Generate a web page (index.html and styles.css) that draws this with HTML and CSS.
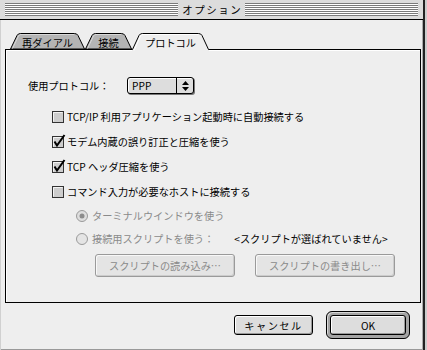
FILE: index.html
```html
<!DOCTYPE html>
<html lang="ja">

<head>
    <meta charset="UTF-8">
    <title>オプション</title>
    <link rel="stylesheet" href="styles.css">
</head>

<body>
    <div class="window">
        <!-- Title bar -->
        <div class="titlebar">
            <div class="stripes"></div>
            <div class="title">オプション</div>
            <div class="stripes"></div>
        </div>

        <div class="content">
            <!-- Tabs -->
            <div class="tabs">
                <div class="tab tab-redial">
                    <svg class="tab-shape" width="75" height="16" viewBox="0 0 75 16">
                        <path d="M0.5 16 L7 2.5 Q8 0.5 10.5 0.5 L64.5 0.5 Q67 0.5 68 2.5 L74.5 16 Z" fill="#b4b4b4" stroke="#000"/>
                        <path d="M2.5 15.5 L8.5 3 Q9.3 1.5 11 1.5 L64 1.5" fill="none" stroke="#d8d8d8"/>
                    </svg>
                    <span>再ダイアル</span>
                </div>
                <div class="tab tab-connect">
                    <svg class="tab-shape" width="47" height="16" viewBox="0 0 47 16">
                        <path d="M0.5 16 L7 2.5 Q8 0.5 10.5 0.5 L36.5 0.5 Q39 0.5 40 2.5 L46.5 16 Z" fill="#b4b4b4" stroke="#000"/>
                        <path d="M2.5 15.5 L8.5 3 Q9.3 1.5 11 1.5 L36 1.5" fill="none" stroke="#d8d8d8"/>
                    </svg>
                    <span>接続</span>
                </div>
                <div class="tab tab-protocol active">
                    <svg class="tab-shape" width="77" height="18" viewBox="0 0 77 18">
                        <path d="M0 18 L0 16.5 L7 2.5 Q8 0.5 10.5 0.5 L66.5 0.5 Q69 0.5 70 2.5 L77 16.5 L77 18 Z" fill="#eeeeee"/>
                        <path d="M0 16.5 L0.5 16.5 L7 2.5 Q8 0.5 10.5 0.5 L66.5 0.5 Q69 0.5 70 2.5 L76.5 16.5 L77 16.5" fill="none" stroke="#000"/>
                        <path d="M2 17.5 L8.5 3 Q9.3 1.5 11 1.5 L66 1.5" fill="none" stroke="#fff"/>
                    </svg>
                    <span>プロトコル</span>
                </div>
            </div>

            <!-- Protocol panel -->
            <div class="panel">
                <div class="protocol-row">
                    <span class="field-label">使用プロトコル：</span>
                    <div class="popup">
                        <span class="popup-value">PPP</span>
                        <span class="popup-arrows">
                            <svg width="7" height="10" viewBox="0 0 7 10">
                                <path d="M0 4 L3.5 0 L7 4 Z M0 6 L3.5 10 L7 6 Z" fill="#000"/>
                            </svg>
                        </span>
                    </div>
                </div>

                <div class="opt">
                    <svg class="checkbox" width="12" height="12" viewBox="0 0 12 12">
                        <rect x="0.5" y="0.5" width="11" height="11" fill="#cdcdcd" stroke="#333"/>
                        <path d="M1.5 10.5 V1.5 H10.5" fill="none" stroke="#f4f4f4"/>
                    </svg>
                    <span>TCP/IP 利用アプリケーション起動時に自動接続する</span>
                </div>
                <div class="opt">
                    <svg class="checkbox" width="12" height="12" viewBox="0 0 12 12">
                        <rect x="0.5" y="0.5" width="11" height="11" fill="#cdcdcd" stroke="#333"/>
                        <path d="M1.5 10.5 V1.5 H10.5" fill="none" stroke="#f4f4f4"/>
                        <path d="M2.5 5.5 L5 9.5 L12.5 -1" fill="none" stroke="#000" stroke-width="2"/>
                    </svg>
                    <span>モデム内蔵の誤り訂正と圧縮を使う</span>
                </div>
                <div class="opt">
                    <svg class="checkbox" width="12" height="12" viewBox="0 0 12 12">
                        <rect x="0.5" y="0.5" width="11" height="11" fill="#cdcdcd" stroke="#333"/>
                        <path d="M1.5 10.5 V1.5 H10.5" fill="none" stroke="#f4f4f4"/>
                        <path d="M2.5 5.5 L5 9.5 L12.5 -1" fill="none" stroke="#000" stroke-width="2"/>
                    </svg>
                    <span>TCP ヘッダ圧縮を使う</span>
                </div>
                <div class="opt">
                    <svg class="checkbox" width="12" height="12" viewBox="0 0 12 12">
                        <rect x="0.5" y="0.5" width="11" height="11" fill="#cdcdcd" stroke="#333"/>
                        <path d="M1.5 10.5 V1.5 H10.5" fill="none" stroke="#f4f4f4"/>
                    </svg>
                    <span>コマンド入力が必要なホストに接続する</span>
                </div>

                <div class="opt sub disabled">
                    <svg class="radio" width="12" height="12" viewBox="0 0 12 12">
                        <circle cx="6" cy="6" r="5.5" fill="#dedede" stroke="#9a9a9a"/>
                        <circle cx="6" cy="6" r="2.5" fill="#8c8c8c"/>
                    </svg>
                    <span>ターミナルウインドウを使う</span>
                </div>
                <div class="opt sub disabled">
                    <svg class="radio" width="12" height="12" viewBox="0 0 12 12">
                        <circle cx="6" cy="6" r="5.5" fill="#e4e4e4" stroke="#9a9a9a"/>
                    </svg>
                    <span>接続用スクリプトを使う：</span>
                    <span class="script-name">&lt;スクリプトが選ばれていません&gt;</span>
                </div>

                <div class="script-buttons">
                    <button class="btn btn-script" disabled>スクリプトの読み込み…</button>
                    <button class="btn btn-script" disabled>スクリプトの書き出し…</button>
                </div>
            </div>

            <!-- Dialog buttons -->
            <div class="footer">
                <button class="btn btn-cancel">キャンセル</button>
                <div class="default-ring">
                    <button class="btn btn-ok">OK</button>
                </div>
            </div>
        </div>
    </div>
</body>

</html>
```

FILE: styles.css
```css
/* Base */
body {
    margin: 0;
    background: #eeeeee;
    font-family: "Noto Sans CJK JP", "Liberation Sans", sans-serif;
    font-size: 10.2px;
    color: #000;
}

/* Window frame */
.window {
    width: 427px;
    height: 350px;
    box-sizing: border-box;
    background: #eeeeee;
    display: flex;
    flex-direction: column;
    box-shadow: inset -2px 0 #cccccc, inset -4px 0 #222, inset -5px 0 #aaaaaa,
        inset 1px 0 #d0d0d0, inset 0 -1px #999;
}

/* Title bar */
.titlebar {
    height: 19px;
    margin-right: 4px;
    padding: 0 5px;
    display: flex;
    align-items: center;
    gap: 3px;
    background: #dcdcdc;
    border-bottom: 1px solid #000;
}

.stripes {
    flex: 1;
    height: 13px;
    background: repeating-linear-gradient(to bottom, #7a7a7a 0 1px, #ffffff 1px 2px);
}

.title {
    font-size: 10.5px;
    letter-spacing: 1.5px;
    padding-left: 1.5px;
    line-height: 19px;
}

.content {
    flex: 1;
    padding: 13px 0 0 5px;
    display: flex;
    flex-direction: column;
}

/* Tabs */
.tabs {
    display: flex;
    height: 16px;
    padding-left: 5px;
    position: relative;
    z-index: 1;
}

.tab {
    position: relative;
    height: 16px;
    display: flex;
    align-items: center;
    justify-content: center;
}

.tab-shape {
    position: absolute;
    left: 0;
    top: 0;
}

.tab span {
    position: relative;
    padding-top: 2px;
}

.tab-redial {
    width: 75px;
}

.tab-connect {
    width: 47px;
}

.tab-protocol {
    width: 77px;
}

/* Panel */
.panel {
    width: 416px;
    height: 254px;
    box-sizing: border-box;
    border: 1px solid #000;
    box-shadow: inset 1px 1px #fff;
    padding: 27px 0 0 22px;
}

.protocol-row {
    height: 17px;
    display: flex;
    align-items: center;
}

.field-label {
    width: 99px;
}

.popup {
    width: 67px;
    height: 17px;
    box-sizing: border-box;
    display: flex;
    border: 1px solid #000;
    border-radius: 3px;
    background: #dddddd;
    box-shadow: inset 1px 1px #fff, 1px 1px #777;
}

.popup-value {
    flex: 1;
    padding-left: 4px;
    line-height: 15px;
}

.popup-arrows {
    width: 16px;
    border-left: 1px solid #000;
    display: flex;
    align-items: center;
    justify-content: center;
}

/* Options */
.opt {
    height: 25px;
    display: flex;
    align-items: center;
    gap: 3px;
    margin-left: 24px;
}

.protocol-row + .opt {
    margin-top: 10px;
}

.checkbox,
.radio {
    overflow: visible;
    flex: none;
}

.opt.sub {
    height: 23px;
    margin-left: 48px;
    gap: 4px;
}

.disabled {
    color: #8a8a8a;
}

.script-name {
    margin-left: 16px;
    color: #000;
}

.script-buttons {
    display: flex;
    gap: 20px;
    margin: 4px 0 0 67px;
}

/* Buttons */
.btn {
    font: inherit;
    color: #000;
    height: 20px;
    padding: 0;
    border: 1px solid #000;
    border-radius: 3px;
    background: #dddddd;
    box-shadow: inset 1px 1px #fff, inset -1px -1px #999;
}

.btn-script {
    width: 140px;
    height: 23px;
    color: #8a8a8a;
    border-color: #9a9a9a;
    background: #e4e4e4;
    box-shadow: inset 1px 1px #f8f8f8, inset -1px -1px #cccccc;
}

.footer {
    display: flex;
    justify-content: flex-end;
    align-items: center;
    gap: 13px;
    margin-top: 8px;
    padding-right: 17px;
}

.btn-cancel {
    width: 79px;
    letter-spacing: 1.5px;
}

.default-ring {
    display: flex;
    padding: 3px;
    border: 1px solid #000;
    border-radius: 6px;
    background: #a4a4a4;
    box-shadow: inset 1px 1px #d8d8d8;
}

.btn-ok {
    width: 76px;
}
```
